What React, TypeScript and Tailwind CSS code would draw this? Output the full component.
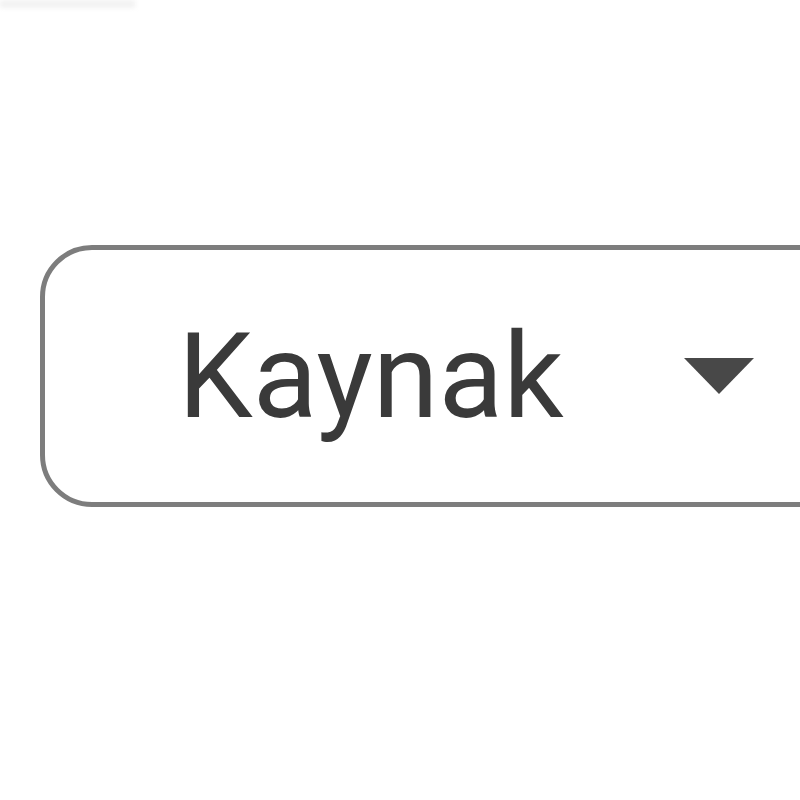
import React from "react";

export default function App() {
  return (
    <div className="w-[800px] h-[800px] bg-white overflow-hidden" style={{ fontFamily: "Roboto, 'Noto Sans', sans-serif" }}>
      <div className="h-[8px] w-[135px] bg-[#f2f2f2] blur-[2px]" />
      <div className="ml-[40px] mt-[237px] w-[900px] h-[262px] border-[5px] border-[#7d7d7d] rounded-[52px] flex items-center">
        <span className="ml-[133px] text-[119px] leading-none text-[#3a3a3a] w-[506px]">Kaynak</span>
        <svg width="70" height="36" viewBox="0 0 70 36" className="mt-[0px]">
          <polygon points="0,0 70,0 35,36" fill="#484848" />
        </svg>
      </div>
    </div>
  );
}
